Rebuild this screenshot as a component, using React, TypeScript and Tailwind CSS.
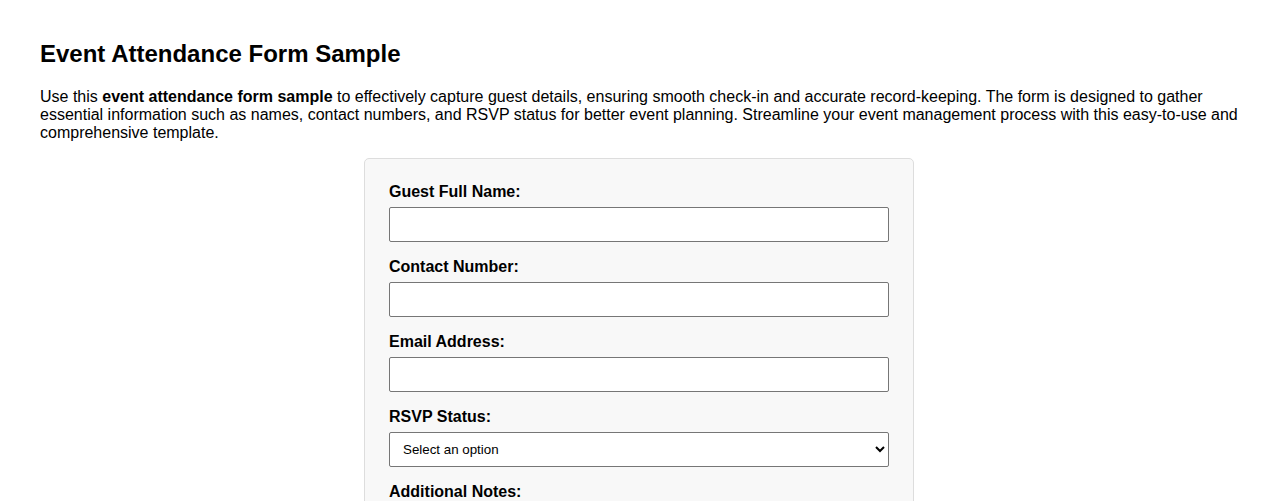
import React from 'react';

const fields = [
  { id: 'name', label: 'Guest Full Name:', type: 'text' },
  { id: 'phone', label: 'Contact Number:', type: 'tel' },
  { id: 'email', label: 'Email Address:', type: 'email' },
];

const App: React.FC = () => {
  return (
    <div className="min-h-screen bg-white px-10 pt-10 text-black font-['Liberation_Sans',Arial,sans-serif]">
      <h1 className="text-[24px] font-bold leading-[28px] mb-[20px]">Event Attendance Form Sample</h1>
      <p className="text-[16px] leading-[18px] mb-4">
        Use this <strong>event attendance form sample</strong> to effectively capture guest details, ensuring smooth
        check-in and accurate record-keeping. The form is designed to gather essential information such as names,
        contact numbers, and RSVP status for better event planning. Streamline your event management process with this
        easy-to-use and comprehensive template.
      </p>

      <form className="mx-auto w-[550px] rounded-[5px] border border-[#dddddd] bg-[#f8f8f8] px-6 pt-6 pb-6">
        {fields.map((field) => (
          <div key={field.id} className="mb-4">
            <label htmlFor={field.id} className="block text-[16px] font-bold leading-[18px] mb-[6px]">
              {field.label}
            </label>
            <input
              id={field.id}
              type={field.type}
              className="block h-[35px] w-full rounded-[2px] border border-[#767676] bg-white px-3 text-[13px]"
            />
          </div>
        ))}

        <div className="mb-4">
          <label htmlFor="rsvp" className="block text-[16px] font-bold leading-[18px] mb-[6px]">
            RSVP Status:
          </label>
          <select
            id="rsvp"
            defaultValue=""
            className="block h-[35px] w-full rounded-[2px] border border-[#767676] bg-white pl-[9px] pr-1 text-[13.33px] font-['Liberation_Sans',Arial,sans-serif]"
          >
            <option value="">Select an option</option>
            <option value="yes">Attending</option>
            <option value="no">Not Attending</option>
            <option value="maybe">Maybe</option>
          </select>
        </div>

        <div className="mb-4">
          <label htmlFor="notes" className="block text-[16px] font-bold leading-[18px] mb-[6px]">
            Additional Notes:
          </label>
          <textarea
            id="notes"
            rows={4}
            className="block w-full rounded-[2px] border border-[#767676] bg-white px-3 py-2 text-[13px]"
          />
        </div>
      </form>
    </div>
  );
};

export default App;
